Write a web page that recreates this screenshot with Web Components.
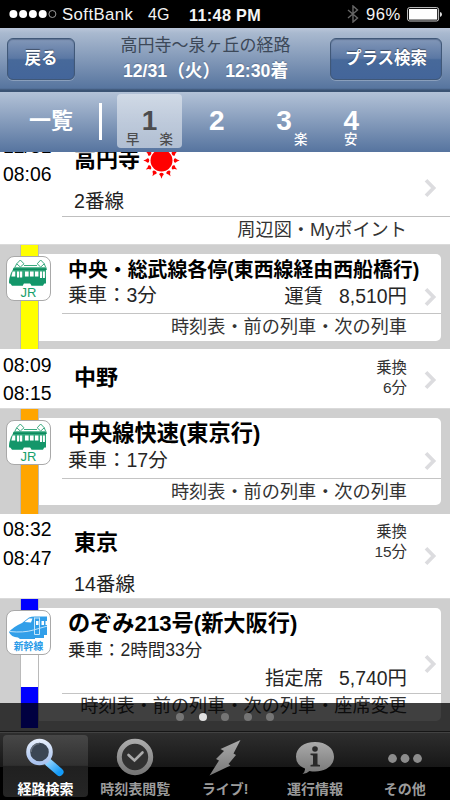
<!DOCTYPE html>
<html lang="ja">
<head>
<meta charset="utf-8">
<title>経路検索</title>
<style>
html,body{margin:0;background:#fff}
body{font-family:"Liberation Sans","Noto Sans CJK JP",sans-serif;color:#000;width:451px;height:800px;overflow:hidden}
</style>
</head>
<body>
<route-app></route-app>
<script>
const define = (name, html, after) => customElements.define(name, class extends HTMLElement {
  constructor() {
    super();
    const t = document.createElement('template');
    t.innerHTML = html;
    this.attachShadow({mode: 'open'}).appendChild(t.content.cloneNode(true));
  }
  connectedCallback() { if (after) after.call(this, this.shadowRoot); }
});

define('chevron-icon', `<style>:host{display:block;width:14px;height:20px}svg{display:block}</style>
<svg width="14" height="20" viewBox="0 0 14 20"><path d="M2 2.2 9.6 10 2 17.8" fill="none" stroke="#dcdcdf" stroke-width="3.7"/></svg>`);

define('phone-status', `<style>
:host{display:flex;align-items:center;height:28px;background:#000;color:#f4f4f4;font-size:16px;line-height:28px;white-space:pre}
svg{display:block;flex:none}.sig{margin-left:9px;margin-right:4px}
.c{width:72px;font-size:16.800px;letter-spacing:.4px}.g{width:24px;margin-left:14px}.t{width:73px;margin-left:17px;font-weight:700;font-size:16.200px;letter-spacing:.35px}
.bt{margin-left:85px}.p{width:38px;margin-left:7px;font-size:16.600px;letter-spacing:.5px}.bat{margin-left:3px}
span{position:relative;top:1px}
</style>
<svg class="sig" width="49" height="10" viewBox="0 0 49 10"><g fill="#fff"><circle cx="4.4" cy="5" r="4"/><circle cx="14.1" cy="5" r="4"/><circle cx="23.9" cy="5" r="4"/><circle cx="33.7" cy="5" r="4"/></g><circle cx="43.4" cy="5" r="3.5" fill="none" stroke="#aaa" stroke-width=".9"/></svg>
<span class="c">SoftBank</span><span class="g">4G</span><span class="t">11:48 PM</span>
<svg class="bt" width="12" height="18" viewBox="0 0 12 18"><path d="M1 5 10.5 13 6 17V1l4.500 4L1 13" fill="none" stroke="#666" stroke-width="1.400"/></svg>
<span class="p">96%</span>
<svg class="bat" width="36" height="15" viewBox="0 0 36 15"><rect x=".6" y=".6" width="31" height="13.4" rx="2" fill="none" stroke="#ccc" stroke-width="1"/><rect x="2" y="2" width="28.200" height="10.600" fill="#fff"/><path d="M33 5q2 .5 2 2.400T33 10z" fill="#ddd"/></svg>`);

define('nav-button', `<style>
:host{display:block;box-sizing:border-box;height:42px;border:1.500px solid #405878;border-radius:6px;background:linear-gradient(#8297b8,#5b78a4 48%,#47699a 52%,#43659a);box-shadow:0 1px 0 rgba(255,255,255,.25),inset 0 1px 1px rgba(30,50,80,.35);color:#fff;font-weight:700;font-size:16.500px;line-height:38px;text-align:center;text-shadow:0 -1px 1px rgba(0,0,0,.4)}
</style><slot></slot>`);

define('nav-header', `<style>
:host{display:grid;grid-template-columns:68px 1fr 112px;box-sizing:border-box;height:64px;padding:10px 8px 0 7px;background:linear-gradient(#b9c6d9 0,#a9b9cf 8%,#57759f 94%,#3b5373 97%,#3b5373)}
.mid{text-align:center;margin:-6px 0 0 6px;white-space:pre}
.a{font-size:17px;line-height:27px;color:#3c4858}
.b{font-size:17.700px;line-height:25px;font-weight:700;color:#fff;text-shadow:0 -1px 1px rgba(30,50,80,.3)}
</style>
<nav-button>戻る</nav-button>
<div class="mid"><div class="a">高円寺〜泉ヶ丘の経路</div><div class="b">12/31（火） 12:30着</div></div>
<nav-button>プラス検索</nav-button>`);

define('route-tab', `<style>
:host{display:grid;box-sizing:border-box;width:65px;height:54px;grid-template:37px 17px/1fr 1fr;color:#fff;border-radius:4px;font-weight:700}
:host([on]){background:linear-gradient(rgba(255,255,255,.42),rgba(255,255,255,.52));color:#4c4c4e}
.n{grid-column:1/3;text-align:center;font-size:28px;line-height:21px;padding-top:16px}
.l,.r{font-size:13.400px;line-height:17px;font-weight:500}
.l{padding-left:9px}.r{padding-left:10px}
:host([mid]) .l{padding-left:25px;white-space:nowrap}
</style><div class="n"><slot></slot></div><div class="l"><slot name="l"></slot></div><div class="r"><slot name="r"></slot></div>`);

define('route-tabs', `<style>
:host{display:flex;height:60px;background:linear-gradient(#b3c2d7,#56749f)}
.all{width:99px;box-sizing:border-box;padding-left:29px;color:#fff;font-size:22px;font-weight:700;line-height:58px}
.bar{width:3px;height:37px;background:#fff;margin:11px 15px 0 0}
route-tab{margin-top:2px;margin-right:2.300px}
</style>
<div class="all">一覧</div><div class="bar"></div>
<route-tab on>1<span slot="l">早</span><span slot="r">楽</span></route-tab>
<route-tab>2</route-tab>
<route-tab>3<span slot="r">楽</span></route-tab>
<route-tab mid>4<span slot="l">安</span></route-tab>`);

define('station-row', `<style>
:host{display:block;background:#fff;box-sizing:border-box;height:var(--h)}
.main{display:grid;grid-template-columns:74px 1fr auto 43px;height:var(--mh,100%)}
.times{padding:var(--tp) 0 0 3px;font-size:19.400px;line-height:var(--tl,28.500px)}
.name{padding-top:var(--np);font-size:22px;font-weight:700;line-height:30px;display:flex;align-items:center;height:30px}
.plat{font-size:19.600px;line-height:28px;margin-top:var(--pm);color:#222}
.meta{padding-top:var(--ep);font-size:15.400px;line-height:19.500px;text-align:right;color:#333}
chevron-icon{margin:var(--cp) 0 0 17px}
.foot{margin-left:62px;border-top:1px solid #bfbfbf;padding-right:43px;text-align:right;font-size:18.200px;line-height:27px;color:#333}
:host(:not([foot])) .foot{display:none}
</style>
<div class="main"><div class="times"><slot name="times"></slot></div>
<div><div class="name"><slot name="name"></slot></div><div class="plat"><slot name="plat"></slot></div></div>
<div class="meta"><slot name="meta"></slot></div><chevron-icon></chevron-icon></div>
<div class="foot"><slot name="foot"></slot></div>`);

define('sun-icon', `<style>:host{display:block;width:37px;height:37px;margin-left:2.500px}svg{display:block}</style>
<svg width="37" height="37" viewBox="-18.500 -18.500 37 37"><g fill="#f00"><circle r="11"/></g></svg>`, function (r) {
  const g = r.querySelector('g');
  let s = g.innerHTML;
  for (let i = 0; i < 12; i++) s += `<path d="M0-18.200Q.8-15 2.300-14Q2.200-12.200 0-12.200T-2.300-14Q-.8-15 0-18.200z" transform="rotate(${i * 30})"/>`;
  g.innerHTML = s;
});

define('line-badge', `<style>
:host{display:block;box-sizing:border-box;width:45px;height:45px;border:1px solid #a9a9a9;border-radius:8px;background:#fff;text-align:center;white-space:nowrap}
svg{display:block;margin:2px 0 0 1px}
:host([kind=jr]) .shin,:host([kind=shin]) .jr{display:none}
div{line-height:12px}.jr div{color:#16a06c;font-size:13px}.shin div{color:#2a9be8;font-size:9.800px;font-weight:700}
</style>
<div class="jr"><svg width="41" height="28" viewBox="0 0 41 28"><path d="M8.700 4.800 12.300 1 16 4.800 12.300 8zM29.200 4.800 32.700 1 36.300 4.800 32.700 8zM7 8l1.700-3.200M36.300 4.800 37.500 8M16 6.500h13" fill="none" stroke="#3aaa80" stroke-width="1"/><path d="M6 8.200h32.500V11H38v13H1.200q0-8 3.500-13z" fill="#2fa67a"/><path d="M5 10.300h33.500M1.500 22.500H38" stroke="#0d8a5e" stroke-width="1.600"/><path d="M1.200 24.500q0-4 .8-7H38v7z" fill="#14966a"/><g fill="#fff"><path d="M4.600 12.500h2.600v5H3.400zM9 12.500h2.200v6H9zM12 12.500h2.200v6H12zM17 12.500h3.600v5H17zM22 12.500h3.600v5H22zM27 12.500h3.400v5H27zM32 12.500h2v6.500h-2zM34.900 12.500h2v6.500h-2z"/></g><g fill="#11986a"><path d="M2 24h14l-1.200 2.800H4zM22 24h14.500l-1.500 2.800H23.500z"/></g></svg><div>JR</div></div>
<div class="shin"><svg width="41" height="28" viewBox="0 0 41 28"><path d="M1 19Q5 14 14 10L21 4.500Q23 3.500 27 3.500H39V22H36V25H27V26H12L10 24.500Q3 24 1 19z" fill="#329fe9"/><path d="M16.500 9 21 5.500h3.500L23 9.500z" fill="#fff"/><path d="M1.500 18.500q14 1.500 24-1.500l13.500-3.800" fill="none" stroke="#bfe3fb" stroke-width="1"/><path d="M26.500 4.500v17M31.500 4.500v17M26.500 5h5M26.500 21.500h5" stroke="#c6e6fb" stroke-width="1" fill="none"/><path d="M28 8h2.500v4H28zM33.500 8H36v4h-2.500zM37.500 8H39v4h-1.500z" fill="#fff"/></svg><div>新幹線</div></div>`);

define('ride-row', `<style>
:host{display:grid;grid-template-columns:39px 402px;box-sizing:border-box;height:var(--h);background:#cfcfcf;position:relative;border-top:1px solid #dadada}
.rail{margin-left:21px;width:17px;background:var(--rail);box-shadow:0 0 0 .8px #b5b5b5;clip-path:inset(0 -1px 0 -1px);height:100%}
line-badge{position:absolute;left:6px;top:11px}
.card{margin:9px 0 7px;background:#fff;border-radius:0 5px 5px 0;height:var(--ch);box-sizing:border-box;padding-top:3px;position:relative}
.title{font-size:var(--ts,22.200px);font-weight:700;line-height:26px;padding-left:29px;white-space:nowrap}
.info{height:var(--ih);display:grid;grid-template-columns:1fr auto;padding:0 34px 0 29px;box-sizing:border-box;color:#262626;margin-top:var(--im,-1px)}
.sub{font-size:var(--ss,19.500px);line-height:26px}
.fare{font-size:19.400px;line-height:28px;padding-top:var(--fp,0);display:flex;gap:16px}
.foot{margin-left:23px;padding-right:34px;border-top:1px solid #c4c4c4;text-align:right;font-size:18.160px;line-height:var(--fl,27px);color:#333;white-space:nowrap}
chevron-icon{position:absolute;left:385px;top:var(--cp)}
</style>
<div class="rail"></div>
<div class="card"><div class="title"><slot name="title"></slot></div>
<div class="info"><div class="sub"><slot name="sub"></slot></div><div class="fare"><slot name="fare"></slot></div></div>
<div class="foot"><slot name="foot"></slot></div><chevron-icon></chevron-icon></div>
<line-badge></line-badge>`, function (r) {
  r.querySelector('line-badge').setAttribute('kind', this.getAttribute('kind'));
});

define('page-dots', `<style>
:host{position:absolute;left:0;bottom:69px;width:450px;height:28px;background:rgba(0,0,0,.75);display:flex;justify-content:center;gap:14.500px;box-sizing:border-box;padding-top:9.500px}
i{width:8px;height:8px;border-radius:50%;background:#757575}i.on{background:#e2e2e2}
</style><i></i><i class="on"></i><i></i><i></i><i></i>`);

define('tab-item', `<style>
:host{display:flex;flex-direction:column;align-items:center;box-sizing:border-box;width:85px;height:62px;border-radius:4px;color:#9b9b9b;font-size:14px;font-weight:700;line-height:20px;white-space:nowrap}
:host([on]){background:linear-gradient(#474747,#303030 49%,#202020 50%,#252525);color:#fff}
.i{height:44px}
</style><div class="i"><slot name="icon"></slot></div><slot></slot>`);

define('tab-bar', `<style>
:host{position:absolute;left:0;bottom:0;width:450px;height:69px;box-sizing:border-box;border-top:1px solid #161616;background:linear-gradient(#424242 0,#424242 1px,#2e2e2e 1px,#171717 35px,#000 35px);display:flex;padding:3px 0 0 3px;gap:4.800px}
svg{display:block}
</style>
<tab-item on><svg slot="icon" width="50" height="44" viewBox="3 0 50 44"><defs><linearGradient id="h" x1="0" y1="0" x2="1" y2="1"><stop stop-color="#8bd0ff"/><stop offset="1" stop-color="#149bf8"/></linearGradient><linearGradient id="l" x1="0" y1="0" x2="0" y2="1"><stop stop-color="#e4edfc"/><stop offset="1" stop-color="#a8c2ee"/></linearGradient></defs><path d="M30.500 27.500 41.500 37" stroke="url(#h)" stroke-width="8" stroke-linecap="round"/><circle cx="21.500" cy="17" r="11.300" fill="#3b4654" stroke="url(#l)" stroke-width="4"/><path d="M13 17a8.500 8.500 0 0 1 8.500-8.500" stroke="#69727e" stroke-width="1.500" fill="none"/></svg>経路検索</tab-item>
<tab-item><svg slot="icon" width="40" height="44" viewBox="0 0 40 44"><defs><linearGradient id="g" x1="0" y1="0" x2="0" y2="1"><stop stop-color="#aaa"/><stop offset="1" stop-color="#777"/></linearGradient></defs><circle cx="20" cy="22" r="15.700" fill="#303030" stroke="url(#g)" stroke-width="5"/><path d="m13.500 20 6 5.500 8-8" fill="none" stroke="#aaa" stroke-width="2.600" stroke-linecap="round"/></svg>時刻表閲覧</tab-item>
<tab-item><svg slot="icon" width="40" height="44" viewBox="0 0 40 44"><defs><linearGradient id="g" x1="0" y1="0" x2="0" y2="1"><stop stop-color="#b5b5b5"/><stop offset="1" stop-color="#777"/></linearGradient></defs><path d="M35.500 5 28.500 18.500 31 20 23.500 29 25.500 30.500 4.500 40.500 14 25.500 11 24 19 16 15.500 14z" fill="url(#g)"/></svg>ライブ!</tab-item>
<tab-item><svg slot="icon" width="44" height="44" viewBox="0 0 44 44"><defs><linearGradient id="g" x1="0" y1="0" x2="0" y2="1"><stop stop-color="#b2b2b2"/><stop offset="1" stop-color="#777"/></linearGradient></defs><path d="M22 7c11 0 19 6.200 19 14.700S33 36.500 22 36.500q-3 0-5.500-.6Q14 38.500 9.500 39q3-3 2.500-5.500Q3 30 3 21.700C3 13 11 7 22 7z" fill="url(#g)"/><circle cx="22" cy="14" r="2.800" fill="#292929"/><path d="M17.500 18.500h7V29.500l2.500.5v1.600H17.500V30l2.500-.5V20.500l-2.500-.5z" fill="#292929"/></svg>運行情報</tab-item>
<tab-item><svg slot="icon" width="40" height="44" viewBox="0 0 40 44"><g fill="#8c8c8c"><circle cx="7.500" cy="23.500" r="4.400"/><circle cx="20" cy="23.500" r="4.400"/><circle cx="32.500" cy="23.500" r="4.400"/></g></svg>その他</tab-item>`);

define('route-app', `<style>
:host{display:flex;flex-direction:column;width:450px;height:800px;position:relative;overflow:hidden;background:#fff}
.scroll{flex:1;overflow:hidden;background:#cfcfcf}
.list{margin-top:-22px}
span,div[slot]{display:block}
.nm{flex:none}
</style>
<phone-status></phone-status><nav-header></nav-header><route-tabs></route-tabs>
<div class="scroll"><div class="list">
<station-row foot style="--h:114px;--mh:86px;--tp:2px;--tl:28px;--np:15px;--pm:12px;--cp:47.500px">
<div slot="times"><span>12/31</span><span>08:06</span></div><span slot="name" class="nm">高円寺</span><sun-icon slot="name"></sun-icon><span slot="plat">2番線</span><span slot="foot">周辺図・Myポイント</span></station-row>
<ride-row kind="jr" style="--h:105px;--ch:87px;--rail:#ff0;--ts:19.900px;--ih:31px;--cp:33px">
<span slot="title">中央・総武線各停(東西線経由西船橋行)</span><span slot="sub">乗車：3分</span><span slot="fare">運賃</span><span slot="fare">8,510円</span><span slot="foot">時刻表・前の列車・次の列車</span></ride-row>
<station-row style="--h:59px;--tp:1.500px;--np:14px;--pm:0px;--ep:9px;--cp:20.500px">
<div slot="times"><span>08:09</span><span>08:15</span></div><span slot="name">中野</span><div slot="meta"><span>乗換</span><span>6分</span></div></station-row>
<ride-row kind="jr" style="--h:106px;--ch:87px;--rail:#ffa500;--im:0px;--ih:31px;--cp:33px">
<span slot="title">中央線快速(東京行)</span><span slot="sub">乗車：17分</span><span slot="foot">時刻表・前の列車・次の列車</span></ride-row>
<station-row style="--h:84px;--tp:1px;--np:14px;--pm:12px;--ep:8px;--cp:32px">
<div slot="times"><span>08:32</span><span>08:47</span></div><span slot="name">東京</span><span slot="plat">14番線</span><div slot="meta"><span>乗換</span><span>15分</span></div></station-row>
<ride-row kind="shin" style="--h:130px;--ch:113px;--rail:linear-gradient(#00f 0,#00f 30px,#fff 30px,#fff 88px,#00f 88px);--ih:56px;--im:0px;--ss:17.500px;--fp:27px;--fl:25px;--cp:46px">
<span slot="title">のぞみ213号(新大阪行)</span><span slot="sub">乗車：2時間33分</span><span slot="fare">指定席</span><span slot="fare">5,740円</span><span slot="foot">時刻表・前の列車・次の列車・座席変更</span></ride-row>
</div></div>
<page-dots></page-dots><tab-bar></tab-bar>`);
</script>
</body>
</html>
